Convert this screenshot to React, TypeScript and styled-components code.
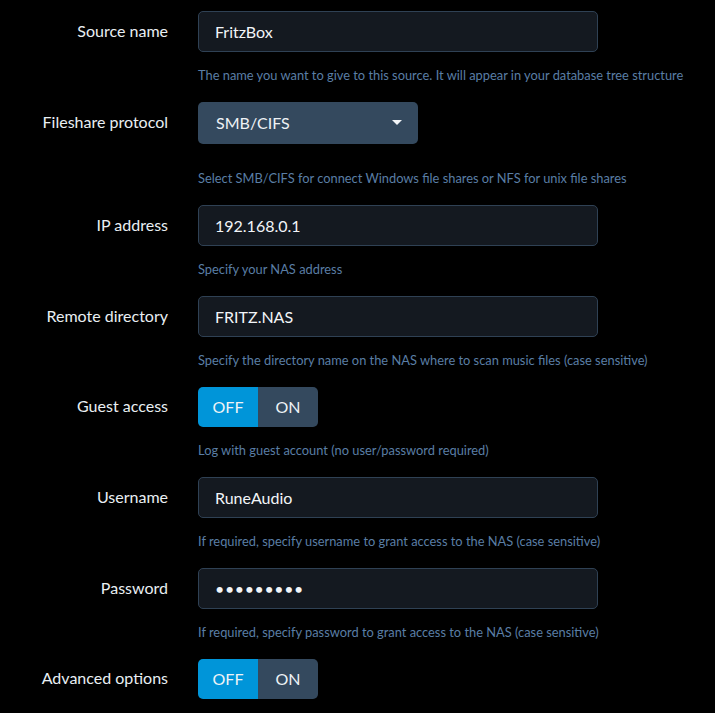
import React from "react";
import styled, { createGlobalStyle } from "styled-components";

const GlobalStyle = createGlobalStyle`
  html, body { margin: 0; padding: 0; background: #000; }
  body { font-family: Lato, "Open Sans", sans-serif; color: #e6ecf0; }
  * { box-sizing: border-box; }
`;

const Form = styled.form`
  padding-top: 11px;
  width: 715px;
`;

const Group = styled.div`
  display: grid;
  grid-template-columns: 168px 1fr;
  column-gap: 30px;
  margin-bottom: 18px;
`;

const Label = styled.label<{ $h: number }>`
  text-align: right;
  font-size: 16px;
  line-height: ${(p) => p.$h - 2}px;
  color: #e9eff3;
`;

const Control = styled.div`
  display: flex;
  flex-direction: column;
  align-items: flex-start;
`;

const TextInput = styled.input`
  width: 400px;
  height: 41px;
  background: #141920;
  border: 1px solid #2f4154;
  border-radius: 5px;
  padding: 0 16px 1px;
  font-family: Lato, sans-serif;
  font-size: 16px;
  color: #f2f5f8;
  outline: none;
  &[type="password"] {
    letter-spacing: 0.6px;
  }
`;

const SelectBox = styled.div`
  width: 220px;
  height: 42px;
  background: #34495e;
  border-radius: 5px;
  padding: 0 16px 1px 18px;
  display: flex;
  align-items: center;
  justify-content: space-between;
  font-size: 16px;
  color: #eef2f5;
`;

const Caret = styled.span`
  width: 0;
  height: 0;
  border-left: 5px solid transparent;
  border-right: 5px solid transparent;
  border-top: 5px solid #f2f5f8;
`;

const Toggle = styled.div`
  display: flex;
  width: 120px;
  height: 40px;
  border-radius: 5px;
  overflow: hidden;
`;

const ToggleBtn = styled.button<{ $active: boolean }>`
  flex: 1;
  border: none;
  padding: 0 0 1px;
  background: ${(p) => (p.$active ? "#0095d9" : "#34495e")};
  color: #eef3f6;
  font-family: Lato, sans-serif;
  font-size: 16px;
  cursor: pointer;
`;

const Help = styled.span<{ $gap: number }>`
  display: block;
  margin-top: ${(p) => p.$gap}px;
  font-size: 12.85px;
  line-height: 18px;
  color: #5a7ea5;
  white-space: nowrap;
`;

type Row = {
  label: string;
  kind: "text" | "password" | "select" | "toggle";
  value?: string;
  help?: string;
};

const rows: Row[] = [
  { label: "Source name", kind: "text", value: "FritzBox", help: "The name you want to give to this source. It will appear in your database tree structure" },
  { label: "Fileshare protocol", kind: "select", value: "SMB/CIFS", help: "Select SMB/CIFS for connect Windows file shares or NFS for unix file shares" },
  { label: "IP address", kind: "text", value: "192.168.0.1", help: "Specify your NAS address" },
  { label: "Remote directory", kind: "text", value: "FRITZ.NAS", help: "Specify the directory name on the NAS where to scan music files (case sensitive)" },
  { label: "Guest access", kind: "toggle", help: "Log with guest account (no user/password required)" },
  { label: "Username", kind: "text", value: "RuneAudio", help: "If required, specify username to grant access to the NAS (case sensitive)" },
  { label: "Password", kind: "password", value: "ruaudio99", help: "If required, specify password to grant access to the NAS (case sensitive)" },
  { label: "Advanced options", kind: "toggle" },
];

function renderControl(r: Row) {
  switch (r.kind) {
    case "select":
      return (
        <SelectBox>
          <span>{r.value}</span>
          <Caret />
        </SelectBox>
      );
    case "toggle":
      return (
        <Toggle>
          <ToggleBtn type="button" $active>OFF</ToggleBtn>
          <ToggleBtn type="button" $active={false}>ON</ToggleBtn>
        </Toggle>
      );
    default:
      return <TextInput type={r.kind} defaultValue={r.value} />;
  }
}

export default function App() {
  return (
    <>
      <GlobalStyle />
      <Form onSubmit={(e) => e.preventDefault()}>
        {rows.map((r) => {
          const h = r.kind === "select" ? 42 : r.kind === "toggle" ? 40 : 41;
          const gap = r.kind === "select" ? 25 : 14;
          return (
            <Group key={r.label}>
              <Label $h={h}>{r.label}</Label>
              <Control>
                {renderControl(r)}
                {r.help && <Help $gap={gap}>{r.help}</Help>}
              </Control>
            </Group>
          );
        })}
      </Form>
    </>
  );
}
